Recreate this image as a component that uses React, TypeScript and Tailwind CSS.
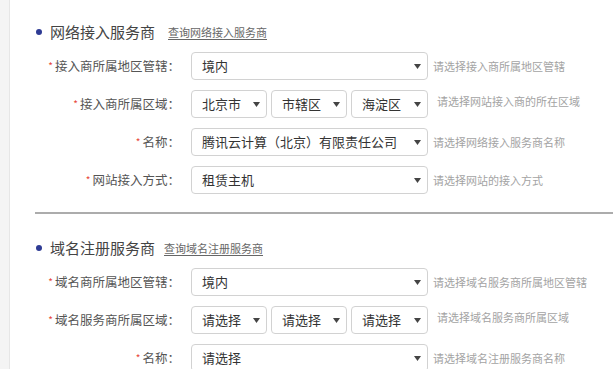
const font = { fontFamily: '"Noto Sans CJK SC", "Noto Sans", sans-serif' };

interface SelectProps {
  value: string;
  width: string;
}

function Arrow() {
  return (
    <svg width="7" height="5" viewBox="0 0 7 5" className="shrink-0">
      <path d="M0 0 L7 0 L3.5 5 Z" fill="#444" />
    </svg>
  );
}

function Select({ value, width }: SelectProps) {
  return (
    <div
      className={`${width} h-[28px] shrink-0 flex items-center justify-between pl-[10px] pr-[6px] bg-white border border-[#d2d2d2] rounded-[4px] text-[13px] text-[#333] whitespace-nowrap`}
    >
      <span>{value}</span>
      <Arrow />
    </div>
  );
}

interface RowProps {
  label: string;
  hint: string;
  values: string[];
}

function Row({ label, hint, values }: RowProps) {
  const multi = values.length > 1;
  return (
    <div className="flex items-center h-[28px]">
      <div className="w-[170px] shrink-0 text-right text-[12.5px] text-[#555] whitespace-nowrap">
        <span className="text-[#e8463a] text-[10px] mr-[2px] relative -top-[1px]">*</span>
        {label}：
      </div>
      <div className="ml-[11px] flex gap-[4px]">
        {multi ? (
          values.map((v, i) => (
            <Select key={i} value={v} width={i === 2 ? "w-[77px]" : "w-[76px]"} />
          ))
        ) : (
          <Select value={values[0]} width="w-[237px]" />
        )}
      </div>
      <span
        className={`text-[11px] text-[#a3a3a3] whitespace-nowrap ${multi ? "ml-[9px] mb-[6px]" : "ml-[5px]"}`}
      >
        {hint}
      </span>
    </div>
  );
}

interface SectionProps {
  title: string;
  link: string;
  linkGap: string;
  rows: RowProps[];
}

function Section({ title, link, linkGap, rows }: SectionProps) {
  return (
    <section>
      <div className="flex items-center h-[20px] pl-[26px]">
        <span className="w-[6px] h-[6px] rounded-full bg-[#2e3b94]" />
        <span className="ml-[8px] text-[15px] text-[#444]">{title}</span>
        <a className={`${linkGap} text-[11px] text-[#666] underline underline-offset-2`}>{link}</a>
      </div>
      <div className="mt-[10px] flex flex-col gap-[10px]">
        {rows.map(r => (
          <Row key={r.label} {...r} />
        ))}
      </div>
    </section>
  );
}

export default function App() {
  return (
    <div className="flex h-screen w-full overflow-hidden bg-white" style={font}>
      <div className="w-[10px] shrink-0 bg-[#f4f4f4] border-r border-[#e6e6e6]" />
      <main className="flex-1 pt-[22px]">
        <Section
          title="网络接入服务商"
          link="查询网络接入服务商"
          linkGap="ml-[13px]"
          rows={[
            { label: "接入商所属地区管辖", hint: "请选择接入商所属地区管辖", values: ["境内"] },
            { label: "接入商所属区域", hint: "请选择网站接入商的所在区域", values: ["北京市", "市辖区", "海淀区"] },
            { label: "名称", hint: "请选择网络接入服务商名称", values: ["腾讯云计算（北京）有限责任公司"] },
            { label: "网站接入方式", hint: "请选择网站的接入方式", values: ["租赁主机"] },
          ]}
        />
        <div className="ml-[25px] mt-[18px] h-[2px] bg-[#acacac]" />
        <div className="pt-[24px]">
          <Section
            title="域名注册服务商"
            link="查询域名注册服务商"
            linkGap="ml-[9px]"
            rows={[
              { label: "域名商所属地区管辖", hint: "请选择域名服务商所属地区管辖", values: ["境内"] },
              { label: "域名服务商所属区域", hint: "请选择域名服务商所属区域", values: ["请选择", "请选择", "请选择"] },
              { label: "名称", hint: "请选择域名注册服务商名称", values: ["请选择"] },
            ]}
          />
        </div>
      </main>
    </div>
  );
}
